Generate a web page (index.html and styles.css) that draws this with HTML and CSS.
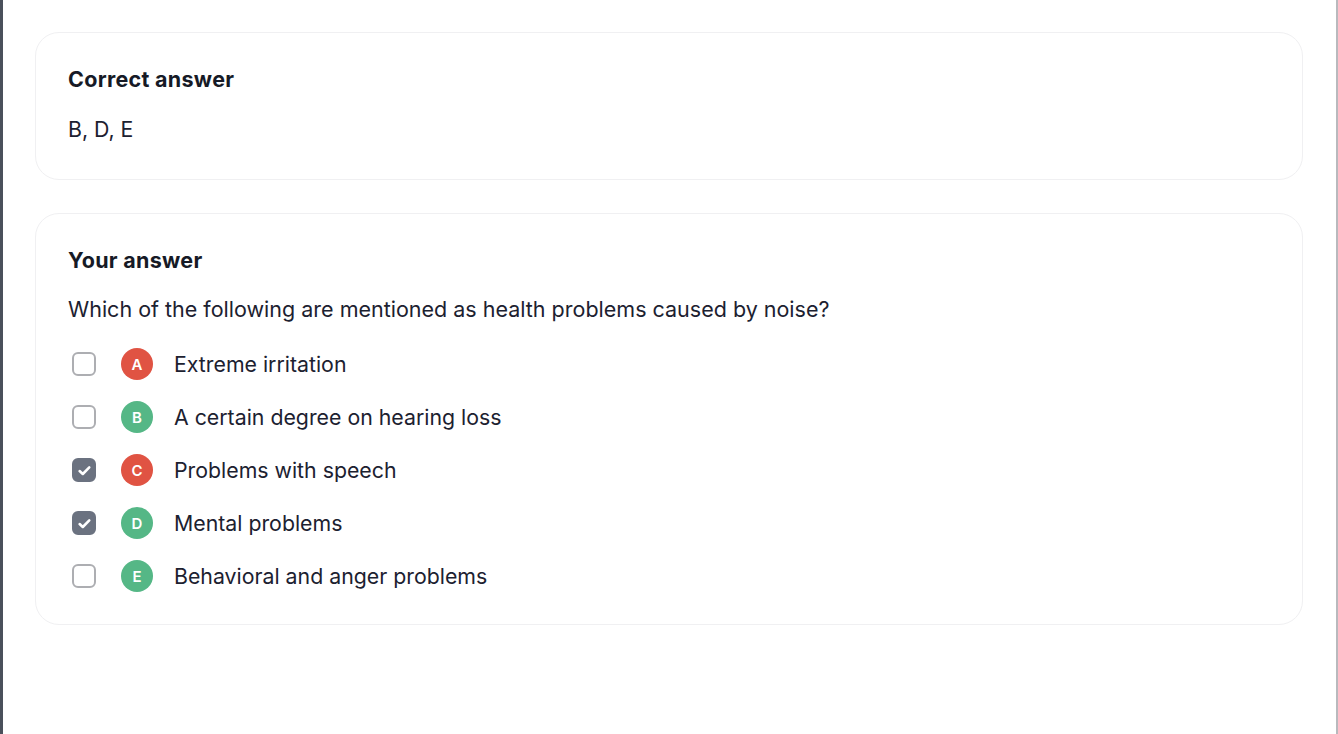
FILE: index.html
```html
<!DOCTYPE html>
<html lang="en">
<head>
<meta charset="utf-8">
<title>Answer review</title>
<link rel="stylesheet" href="styles.css">
</head>
<body>
<div class="frame">
  <main class="page">
    <section class="card card-short">
      <h2 class="card-title">Correct answer</h2>
      <p class="card-text">B, D, E</p>
    </section>
    <section class="card">
      <h2 class="card-title">Your answer</h2>
      <p class="card-text question">Which of the following are mentioned as health problems caused by noise?</p>
      <ul class="options">
        <li class="option">
          <span class="check-wrap"><span class="check"></span></span>
          <span class="badge badge-wrong">A</span>
          <span class="option-text">Extreme irritation</span>
        </li>
        <li class="option">
          <span class="check-wrap"><span class="check"></span></span>
          <span class="badge badge-right">B</span>
          <span class="option-text">A certain degree on hearing loss</span>
        </li>
        <li class="option">
          <span class="check-wrap"><span class="check checked"><svg viewBox="0 0 16 16" width="17" height="17"><path d="M3.4 8.5l3 2.8 6.1-6.3" fill="none" stroke="#fff" stroke-width="2.4" stroke-linecap="round" stroke-linejoin="round"/></svg></span></span>
          <span class="badge badge-wrong">C</span>
          <span class="option-text">Problems with speech</span>
        </li>
        <li class="option">
          <span class="check-wrap"><span class="check checked"><svg viewBox="0 0 16 16" width="17" height="17"><path d="M3.4 8.5l3 2.8 6.1-6.3" fill="none" stroke="#fff" stroke-width="2.4" stroke-linecap="round" stroke-linejoin="round"/></svg></span></span>
          <span class="badge badge-right">D</span>
          <span class="option-text">Mental problems</span>
        </li>
        <li class="option">
          <span class="check-wrap"><span class="check"></span></span>
          <span class="badge badge-right">E</span>
          <span class="option-text">Behavioral and anger problems</span>
        </li>
      </ul>
    </section>
  </main>
</div>
</body>
</html>
```

FILE: styles.css
```css
* { box-sizing: border-box; }
html, body { margin: 0; padding: 0; height: 100%; }
body {
  font-family: Inter, "Noto Sans", "Liberation Sans", sans-serif;
  color: #1c2130;
  background: #ffffff;
}
.frame {
  min-height: 100%;
  border-left: 3px solid #4a505b;
  border-right: 2px solid #b9b9bd;
  background: #ffffff;
}
.page {
  padding: 32px 33px 32px 32px;
  display: flex;
  flex-direction: column;
  gap: 33px;
}
.card {
  border: 1px solid #f0f0f2;
  border-radius: 24px;
  padding: 32px 32px 32px 32px;
  background: #fff;
}
.card-short { padding-bottom: 36px; }
.card-title {
  margin: 0;
  font-size: 21.5px;
  line-height: 28px;
  font-weight: 700;
  letter-spacing: 0.3px;
  color: #161a26;
}
.card-text {
  margin: 22px 0 0;
  font-size: 21.3px;
  line-height: 28px;
  font-weight: 400;
}
.question {
  margin-top: 21px;
  font-size: 21.5px;
}
.options {
  list-style: none;
  margin: 25px 0 0;
  padding: 0;
  display: flex;
  flex-direction: column;
  gap: 21px;
}
.option {
  display: flex;
  align-items: center;
  gap: 21px;
  height: 32px;
}
.check-wrap {
  width: 32px;
  height: 32px;
  display: flex;
  align-items: center;
  justify-content: center;
}
.check {
  width: 24px;
  height: 24px;
  border: 2px solid #adaeb2;
  border-radius: 6px;
  display: flex;
  align-items: center;
  justify-content: center;
}
.check.checked {
  background: #6b7280;
  border-color: #6b7280;
}
.badge {
  width: 32px;
  height: 32px;
  border-radius: 50%;
  display: flex;
  align-items: center;
  justify-content: center;
  color: #fff;
  font-size: 15px;
  font-weight: 600;
}
.badge-wrong { background: #e05343; }
.badge-right { background: #55b786; }
.option-text {
  font-size: 21.3px;
  line-height: 28px;
}
```
